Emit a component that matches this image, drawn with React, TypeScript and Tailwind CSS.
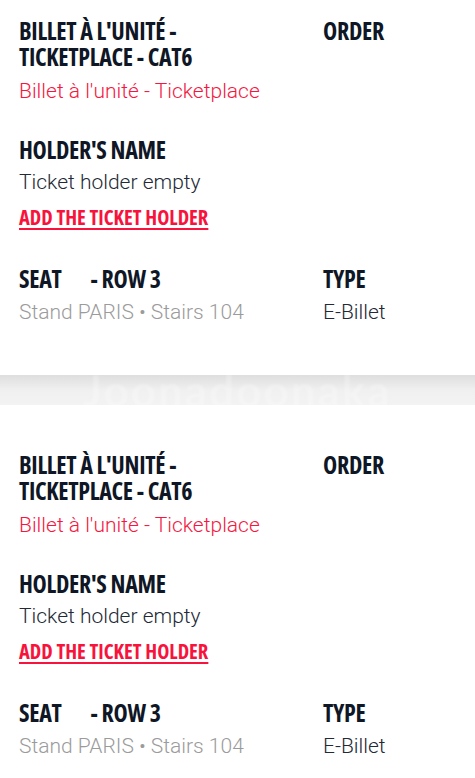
const heading = "font-['Open_Sans',sans-serif] [font-stretch:condensed] font-bold uppercase text-[#0f1726]";
const body = "font-['Roboto','Liberation_Sans',sans-serif] font-light";

function Label({ children }: { children: React.ReactNode }) {
  return <h3 className={`${heading} text-[24px] leading-[26px] tracking-[-0.3px]`}>{children}</h3>;
}

function TicketCard({ top }: { top: string }) {
  return (
    <div className={`bg-white px-[19px] ${top}`}>
      {/* ticket name + order */}
      <div className="flex">
        <div className="w-[304px]">
          <Label>
            Billet à l'unité -<br />
            Ticketplace - Cat6
          </Label>
          <p className={`${body} mt-[8px] text-[21px] leading-[26px] text-[#f5173f]`}>
            Billet à l'unité - Ticketplace
          </p>
        </div>
        <div>
          <Label>Order</Label>
        </div>
      </div>

      {/* holder */}
      <div className="mt-[33px]">
        <Label>Holder's name</Label>
        <p className={`${body} mt-[6px] text-[21px] leading-[26px] text-[#222a36]`}>Ticket holder empty</p>
        <a
          href="#"
          className={`${heading} mt-[10px] inline-block text-[20.5px] leading-[24px] !text-[#f8133d] underline decoration-2 underline-offset-[3px]`}
        >
          Add the ticket holder
        </a>
      </div>

      {/* seat + type */}
      <div className="mt-[35px] flex">
        <div className="w-[304px]">
          <Label>
            Seat <span className="ml-[25px]">- Row 3</span>
          </Label>
          <p className={`${body} mt-[7px] text-[21px] leading-[26px] text-[#9b9b9b]`}>
            Stand PARIS • Stairs 104
          </p>
        </div>
        <div>
          <Label>Type</Label>
          <p className={`${body} mt-[7px] text-[21px] leading-[26px] text-[#222a36]`}>E-Billet</p>
        </div>
      </div>
    </div>
  );
}

export default function App() {
  return (
    <div className="h-[778px] w-[475px] overflow-hidden bg-white">
      <div className="h-[375px] overflow-hidden">
        <TicketCard top="pt-[18px]" />
      </div>
      {/* divider between tickets, faint watermark */}
      <div className="flex h-[30px] items-center justify-center bg-gradient-to-b from-[#dedede] via-[#f0f0f0] to-[#f3f3f3]">
        <span className="font-['Lato',sans-serif] text-[44px] font-bold leading-none tracking-[2px] text-white/25 blur-[1px]">
          Joonadoonaka
        </span>
      </div>
      <TicketCard top="pt-[47px]" />
    </div>
  );
}
